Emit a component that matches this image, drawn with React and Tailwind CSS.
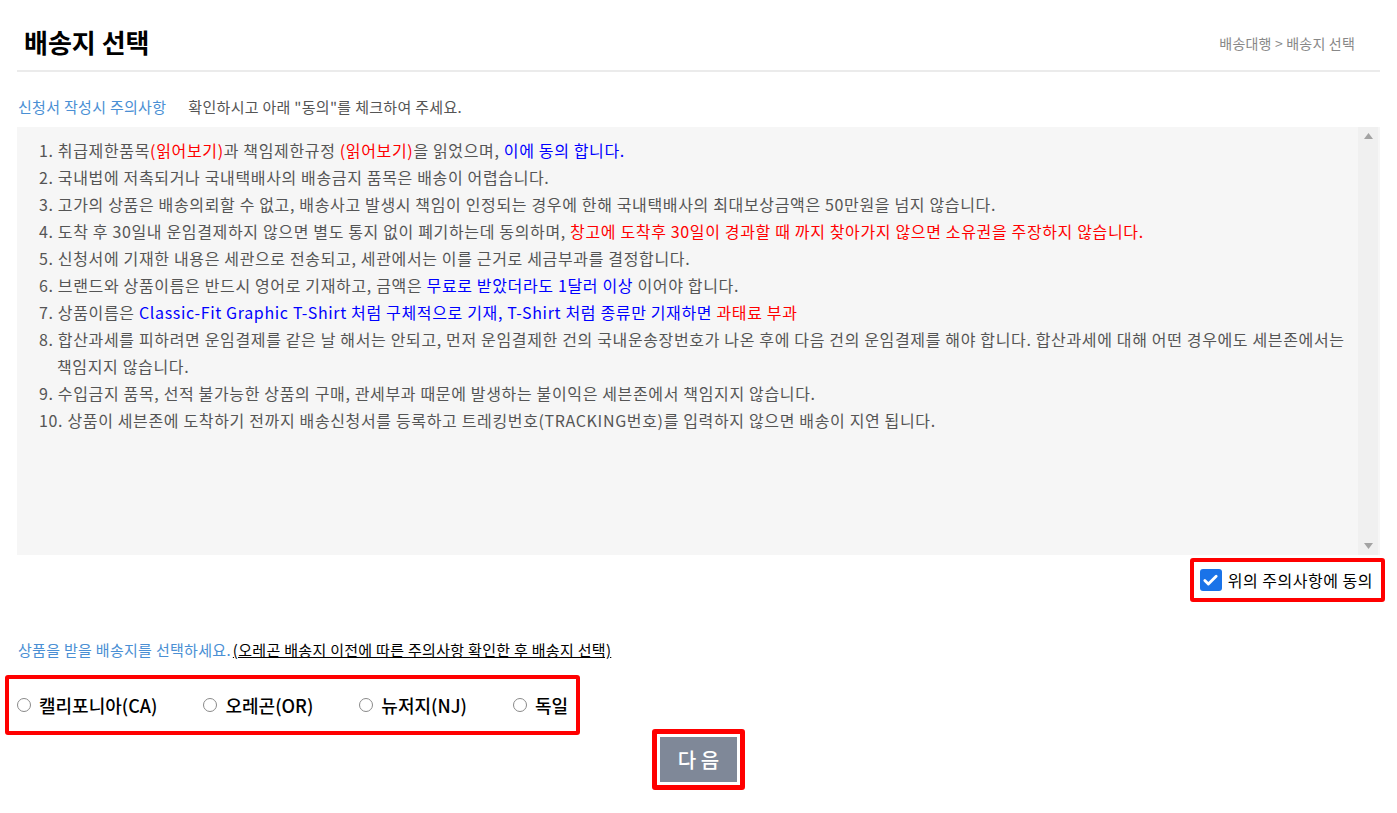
import { Check } from 'lucide-react'

const R = ({ children }) => <span className="text-[#ff0000]">{children}</span>
const B = ({ children }) => <span className="text-[#0000ff]">{children}</span>

const NOTES = [
  <>1. 취급제한품목<R>(읽어보기)</R>과 책임제한규정 <R>(읽어보기)</R>을 읽었으며, <B>이에 동의 합니다.</B></>,
  <>2. 국내법에 저촉되거나 국내택배사의 배송금지 품목은 배송이 어렵습니다.</>,
  <>3. 고가의 상품은 배송의뢰할 수 없고, 배송사고 발생시 책임이 인정되는 경우에 한해 국내택배사의 최대보상금액은 50만원을 넘지 않습니다.</>,
  <>4. 도착 후 30일내 운임결제하지 않으면 별도 통지 없이 폐기하는데 동의하며, <R>창고에 도착후 30일이 경과할 때 까지 찾아가지 않으면 소유권을 주장하지 않습니다.</R></>,
  <>5. 신청서에 기재한 내용은 세관으로 전송되고, 세관에서는 이를 근거로 세금부과를 결정합니다.</>,
  <>6. 브랜드와 상품이름은 반드시 영어로 기재하고, 금액은 <B>무료로 받았더라도 1달러 이상</B> 이어야 합니다.</>,
  <>7. 상품이름은 <B>Classic-Fit Graphic T-Shirt 처럼 구체적으로 기재, T-Shirt 처럼 종류만 기재하면</B> <R>과태료 부과</R></>,
  <>8. 합산과세를 피하려면 운임결제를 같은 날 해서는 안되고, 먼저 운임결제한 건의 국내운송장번호가 나온 후에 다음 건의 운임결제를 해야 합니다. 합산과세에 대해 어떤 경우에도 세븐존에서는 책임지지 않습니다.</>,
  <>9. 수입금지 품목, 선적 불가능한 상품의 구매, 관세부과 때문에 발생하는 불이익은 세븐존에서 책임지지 않습니다.</>,
  <>10. 상품이 세븐존에 도착하기 전까지 배송신청서를 등록하고 트레킹번호(TRACKING번호)를 입력하지 않으면 배송이 지연 됩니다.</>,
]

const PLACES = ['캘리포니아(CA)', '오레곤(OR)', '뉴저지(NJ)', '독일']

export default function App() {
  return (
    <div className="min-h-screen bg-white px-[17px] font-['Noto_Sans_CJK_KR',sans-serif] text-[#555]">
      {/* header */}
      <header className="flex items-end justify-between border-b-2 border-[#ebebeb] pb-[11px] pt-[25px]">
        <h1 className="pl-[7px] text-[26px] font-bold leading-[34px] text-black">배송지 선택</h1>
        <span className="pb-[5px] pr-[25px] text-[14px] tracking-[0.2px] text-[#888]">배송대행 &gt; 배송지 선택</span>
      </header>

      <p className="mt-[24px] text-[15px] leading-[22px] tracking-[0.3px]">
        <span className="pl-px text-[#4a8fd4]">신청서 작성시 주의사항</span>
        <span className="ml-[22px]">확인하시고 아래 "동의"를 체크하여 주세요.</span>
      </p>

      {/* notes box */}
      <div className="mt-[9px] flex h-[428px] bg-[#f6f6f6]">
        <div className="flex-1 pl-[22px] pr-[6px] pt-[10px] text-[16px] leading-[27px] tracking-[0.65px] text-[#555]">
          {NOTES.map((n, i) => (
            <p key={i} className="pl-[18px] indent-[-18px]">{n}</p>
          ))}
        </div>
        <div className="mr-[2px] flex w-[20px] flex-col items-center justify-between bg-[#f0f0f0] py-[6px]">
          <svg width="9" height="6" viewBox="0 0 9 6"><path d="M4.5 0L9 6H0z" fill="#a3a3a3" /></svg>
          <svg width="9" height="6" viewBox="0 0 9 6"><path d="M0 0h9L4.5 6z" fill="#a3a3a3" /></svg>
        </div>
      </div>

      {/* agree */}
      <div className="-mr-[5px] mt-[3px] flex justify-end">
        <label className="flex h-[44px] items-center gap-[6px] rounded-[3px] border-4 border-[#ff0000] pl-[6px] pr-[8px] text-[16px] tracking-[0.5px] text-black">
          <span className="flex h-[22px] w-[22px] items-center justify-center rounded-[3px] bg-[#1a73e8]">
            <Check size={17} strokeWidth={4} color="white" />
          </span>
          위의 주의사항에 동의
        </label>
      </div>

      <p className="mt-[37px] text-[15px] leading-[22px] tracking-[0.3px]">
        <span className="pl-px text-[#4a8fd4]">상품을 받을 배송지를 선택하세요.</span>
        <span className="ml-[2px] text-black underline">(오레곤 배송지 이전에 따른 주의사항 확인한 후 배송지 선택)</span>
      </p>

      {/* places */}
      <div className="-ml-[12px] mt-[14px] inline-flex h-[60px] items-center rounded-[3px] border-4 border-[#ff0000] pl-[8px] pr-[8px]">
        {PLACES.map((p, i) => (
          <label key={p} className={`flex items-center gap-[8px] text-[18px] font-medium text-black ${i < PLACES.length - 1 ? 'mr-[46px]' : ''}`}>
            <span className="h-[14px] w-[14px] rounded-full border border-[#8a8a8a] bg-white" />
            {p}
          </label>
        ))}
      </div>

      <div className="-mt-[6px] flex justify-center">
        <div className="rounded-[3px] border-[5px] border-[#ff0000] bg-white p-[3px]">
          <button className="h-[45px] w-[77px] bg-[#7f8898] text-[20px] font-medium text-white">
            다 음
          </button>
        </div>
      </div>
    </div>
  )
}
